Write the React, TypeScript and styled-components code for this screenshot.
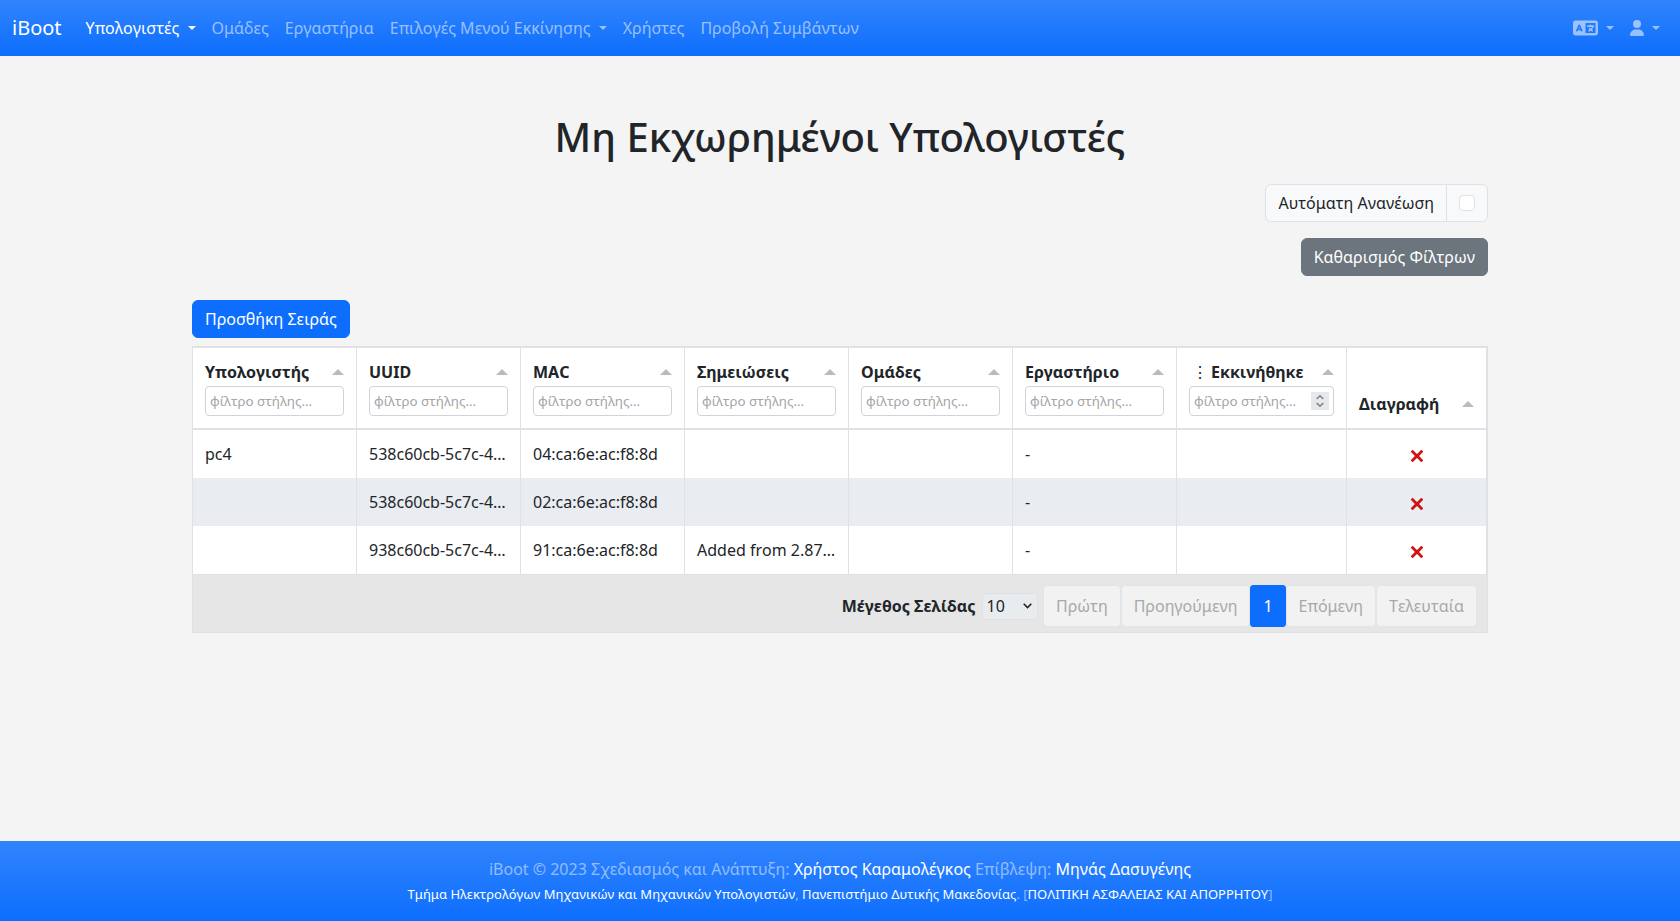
import React from "react";
import styled, { createGlobalStyle, css } from "styled-components";
import { FaLanguage, FaUser } from "react-icons/fa6";

const Global = createGlobalStyle`
  *, *::before, *::after { box-sizing: border-box; }
  body {
    margin: 0;
    background: #f4f4f4;
    color: #212529;
    font: 400 16px/1.5 "Noto Sans", "Liberation Sans", sans-serif;
    font-kerning: none;
  }
  button, input, select { font-family: inherit; font-kerning: none; margin: 0; }
`;

const blueGradient = css`
  background: #0d6efd linear-gradient(180deg, rgba(255, 255, 255, 0.15), rgba(255, 255, 255, 0));
`;

const Page = styled.div`
  min-height: 100vh;
  display: flex;
  flex-direction: column;
`;

const Navbar = styled.nav`
  ${blueGradient}
  height: 56px;
  padding: 0 12px;
  display: flex;
  align-items: center;
`;

const Brand = styled.a`
  color: #fff;
  font-size: 20px;
  line-height: 30px;
  margin-right: 16px;
`;

const NavGroup = styled.div<{ $end?: boolean }>`
  display: flex;
  align-items: center;
  margin-left: ${(p) => (p.$end ? "auto" : "0")};
`;

const NavLink = styled.a<{ $active?: boolean; $toggle?: boolean }>`
  padding: 8px;
  height: 40px;
  white-space: pre;
  color: ${(p) => (p.$active ? "#fff" : "rgba(255, 255, 255, 0.55)")};
  svg { display: inline-block; }
  ${(p) =>
    p.$toggle &&
    css`
      &::after {
        content: "";
        display: inline-block;
        margin-left: 4.08px;
        vertical-align: 4.08px;
        border-top: 4.8px solid;
        border-right: 4.8px solid transparent;
        border-left: 4.8px solid transparent;
      }
    `}
`;

const LanguageIcon = styled(FaLanguage)`
  width: 25px;
  height: 20px;
  vertical-align: -4px;
`;

const UserIcon = styled(FaUser)`
  width: 14px;
  height: 16px;
  vertical-align: -2px;
`;

const Main = styled.main`
  width: 1296px;
  margin: 0 auto;
  padding-top: 57px;
  flex: 1;
  display: flex;
  flex-direction: column;
`;

const Title = styled.h1`
  margin: 0 0 23px;
  font-size: 40px;
  font-weight: 500;
  font-kerning: normal;
  line-height: 48px;
  text-align: center;
`;

const InputGroup = styled.label`
  align-self: flex-end;
  display: flex;
  height: 38px;
  border: 1px solid #dee2e6;
  border-radius: 6px;
  background: #f8f9fa;
`;

const GroupText = styled.span`
  padding: 6px 12px;
  line-height: 24px;
  border-right: 1px solid #dee2e6;
`;

const GroupCheck = styled.span`
  padding: 0 12px;
  display: flex;
  align-items: center;
`;

const Checkbox = styled.input`
  appearance: none;
  width: 16px;
  height: 16px;
  border: 1px solid #dee2e6;
  border-radius: 4px;
  background: #fff;
`;

const Button = styled.button<{ $tone: string; $side: "flex-start" | "flex-end" }>`
  align-self: ${(p) => p.$side};
  height: 38px;
  padding: 6px 12px;
  border: 1px solid ${(p) => p.$tone};
  border-radius: 6px;
  background: ${(p) => p.$tone};
  color: #fff;
  font-size: 16px;
  line-height: 24px;
`;

const Actions = styled.div`
  display: flex;
  flex-direction: column;
  gap: 16px;
  margin-bottom: 24px;
`;

const Table = styled.div`
  margin-top: 8px;
  border: 1px solid #dee2e6;
`;

const columns = "repeat(6, 164px) 170px 1fr";

const HeaderRow = styled.div`
  display: grid;
  grid-template-columns: ${columns};
  height: 83px;
  border-top: 1px solid #dee2e6;
  border-bottom: 2px solid #dee2e6;
  background: #fff;
`;

const HeaderCell = styled.div`
  padding: 12px;
  border-right: 1px solid #dee2e6;
  display: flex;
  flex-direction: column;
  justify-content: flex-end;
  gap: 2px;
  min-width: 0;
`;

const HeaderTitle = styled.div`
  display: flex;
  align-items: center;
  height: 24px;
  font-weight: 700;
`;

const MenuDots = styled.span`
  margin: 0 3px;
  font-weight: 400;
`;

const SortArrow = styled.span`
  margin-left: auto;
  border-left: 6px solid transparent;
  border-right: 6px solid transparent;
  border-bottom: 6px solid #bbb;
`;

const FilterBox = styled.div`
  display: flex;
  align-items: center;
  height: 30px;
  padding: 0 4px;
  border: 1px solid #ced4da;
  border-radius: 4px;
  background: #fff;
`;

const FilterInput = styled.input`
  flex: 1;
  min-width: 0;
  padding: 0;
  border: 0;
  outline: 0;
  background: transparent;
  font-size: 13.333px;
  &::placeholder { color: #a3a5a8; opacity: 1; }
`;

const Spinner = styled.span`
  width: 18px;
  height: 18px;
  background: #e6e8ec;
  svg { display: block; }
`;

const Row = styled.div<{ $shaded: boolean }>`
  display: grid;
  grid-template-columns: ${columns};
  height: 48px;
  background: ${(p) => (p.$shaded ? "#e9ecf1" : "#fff")};
`;

const Cell = styled.div<{ $center?: boolean }>`
  padding: 12px 0 12px ${(p) => (p.$center ? 0 : 12)}px;
  border-right: 1px solid #dee2e6;
  white-space: nowrap;
  text-align: ${(p) => (p.$center ? "center" : "left")};
  svg { vertical-align: -3px; }
`;

const TableFooter = styled.div`
  display: flex;
  align-items: center;
  justify-content: flex-end;
  height: 58px;
  padding: 5px 10px 0 0;
  border-top: 1px solid #dee2e6;
  background: #e6e6e6;
`;

const PageSizeLabel = styled.label`
  font-weight: 700;
`;

const PageSizeBox = styled.span`
  display: grid;
  align-items: center;
  width: 56px;
  height: 27px;
  margin: 0 5.5px 0 6px;
  border: 1px solid #dee2e6;
  border-radius: 4px;
  background: #e9ecef;
  > * { grid-area: 1 / 1; }
  svg {
    justify-self: end;
    margin-right: 5px;
    pointer-events: none;
  }
`;

const PageSize = styled.select`
  appearance: none;
  width: 100%;
  height: 25px;
  padding: 0 0 0 4px;
  border: 0;
  background: transparent;
  color: #212529;
  font-size: 16px;
`;

const PageButton = styled.button<{ $active?: boolean }>`
  height: 42px;
  padding: 0 12px;
  border: 1px solid ${(p) => (p.$active ? "#0d6efd" : "#e2e4e6")};
  border-radius: ${(p) => (p.$active ? 3 : 4)}px;
  background: ${(p) => (p.$active ? "#0d6efd" : "#f2f2f2")};
  color: ${(p) => (p.$active ? "#fff" : "#a6a9ac")};
  font-size: 16px;
  line-height: 24px;
`;

const Footer = styled.footer`
  ${blueGradient}
  height: 80px;
  padding-top: 16px;
  text-align: center;
  color: rgba(255, 255, 255, 0.5);
`;

const FooterLine = styled.div<{ $small?: boolean }>`
  line-height: ${(p) => (p.$small ? 26 : 24)}px;
  font-size: ${(p) => (p.$small ? 13 : 16)}px;
`;

const FooterLink = styled.a`
  color: #fff;
`;

const headings: { label: string; filter?: "text" | "number"; menu?: boolean }[] = [
  { label: "Υπολογιστής", filter: "text" },
  { label: "UUID", filter: "text" },
  { label: "MAC", filter: "text" },
  { label: "Σημειώσεις", filter: "text" },
  { label: "Ομάδες", filter: "text" },
  { label: "Εργαστήριο", filter: "text" },
  { label: "Εκκινήθηκε", filter: "number", menu: true },
  { label: "Διαγραφή" },
];

const rows = [
  ["pc4", "538c60cb-5c7c-4…", "04:ca:6e:ac:f8:8d", "", "", "-", ""],
  ["", "538c60cb-5c7c-4…", "02:ca:6e:ac:f8:8d", "", "", "-", ""],
  ["", "938c60cb-5c7c-4…", "91:ca:6e:ac:f8:8d", "Added from 2.87…", "", "-", ""],
];

const CrossIcon = () => (
  <svg width="14" height="14" viewBox="0 0 24 24">
    <path
      fill="#CE1515"
      d="M22.245,4.015c0.313,0.313,0.313,0.826,0,1.139l-6.276,6.27c-0.313,0.312-0.313,0.826,0,1.14l6.273,6.272c0.313,0.313,0.313,0.826,0,1.14l-2.285,2.277c-0.314,0.312-0.828,0.312-1.142,0l-6.271-6.271c-0.313-0.313-0.828-0.313-1.141,0l-6.276,6.267c-0.313,0.313-0.828,0.313-1.141,0l-2.282-2.28c-0.313-0.313-0.313-0.826,0-1.14l6.278-6.269c0.313-0.312,0.313-0.826,0-1.14L1.709,5.147c-0.314-0.313-0.314-0.827,0-1.14l2.284-2.278C4.308,1.417,4.821,1.417,5.135,1.73L11.405,8c0.314,0.314,0.828,0.314,1.141,0.001l6.276-6.267c0.312-0.312,0.826-0.312,1.141,0L22.245,4.015z"
    />
  </svg>
);

const StepIcon = () => (
  <svg width="18" height="18" viewBox="0 0 18 18" fill="none" stroke="#85888c" strokeWidth="1.6">
    <path d="M5.7 6.8L9 3.8L12.3 6.8M5.7 11.2L9 14.2L12.3 11.2" />
  </svg>
);

const ChevronIcon = () => (
  <svg width="9" height="6" viewBox="0 0 9 6" fill="none" stroke="#212529" strokeWidth="1.6">
    <path d="M0.7 0.8L4.5 4.6L8.3 0.8" />
  </svg>
);

export default function App() {
  return (
    <Page>
      <Global />
      <Navbar>
        <Brand>iBoot</Brand>
        <NavGroup>
          <NavLink $active $toggle>{"Υπολογιστές "}</NavLink>
          <NavLink>Ομάδες</NavLink>
          <NavLink>Εργαστήρια</NavLink>
          <NavLink $toggle>{"Επιλογές Μενού Εκκίνησης "}</NavLink>
          <NavLink>Χρήστες</NavLink>
          <NavLink>Προβολή Συμβάντων</NavLink>
        </NavGroup>
        <NavGroup $end>
          <NavLink $toggle><LanguageIcon />{" "}</NavLink>
          <NavLink $toggle><UserIcon />{" "}</NavLink>
        </NavGroup>
      </Navbar>
      <Main>
        <Title>Μη Εκχωρημένοι Υπολογιστές</Title>
        <Actions>
          <InputGroup>
            <GroupText>Αυτόματη Ανανέωση</GroupText>
            <GroupCheck><Checkbox type="checkbox" /></GroupCheck>
          </InputGroup>
          <Button $tone="#6c757d" $side="flex-end">Καθαρισμός Φίλτρων</Button>
        </Actions>
        <Button $tone="#0d6efd" $side="flex-start">Προσθήκη Σειράς</Button>
        <Table>
          <HeaderRow>
            {headings.map(({ label, filter, menu }) => (
              <HeaderCell key={label}>
                <HeaderTitle>
                  {menu && <MenuDots>⋮</MenuDots>}
                  {label}
                  <SortArrow />
                </HeaderTitle>
                {filter && (
                  <FilterBox>
                    <FilterInput placeholder="φίλτρο στήλης..." />
                    {filter === "number" && <Spinner><StepIcon /></Spinner>}
                  </FilterBox>
                )}
              </HeaderCell>
            ))}
          </HeaderRow>
          {rows.map((row, i) => (
            <Row key={i} $shaded={i % 2 === 1}>
              {row.map((value, j) => <Cell key={j}>{value}</Cell>)}
              <Cell $center><CrossIcon /></Cell>
            </Row>
          ))}
          <TableFooter>
            <PageSizeLabel>Μέγεθος Σελίδας</PageSizeLabel>
            <PageSizeBox>
              <PageSize><option>10</option></PageSize>
              <ChevronIcon />
            </PageSizeBox>
            <PageButton>Πρώτη</PageButton>
            <PageButton>Προηγούμενη</PageButton>
            <PageButton $active>1</PageButton>
            <PageButton>Επόμενη</PageButton>
            <PageButton>Τελευταία</PageButton>
          </TableFooter>
        </Table>
      </Main>
      <Footer>
        <FooterLine>
          iBoot © 2023 Σχεδιασμός και Ανάπτυξη: <FooterLink>Χρήστος Καραμολέγκος</FooterLink> Επίβλεψη:{" "}
          <FooterLink>Μηνάς Δασυγένης</FooterLink>
        </FooterLine>
        <FooterLine $small>
          <FooterLink>Τμήμα Ηλεκτρολόγων Μηχανικών και Μηχανικών Υπολογιστών</FooterLink>,{" "}
          <FooterLink>Πανεπιστήμιο Δυτικής Μακεδονίας</FooterLink>. [
          <FooterLink>ΠΟΛΙΤΙΚΗ ΑΣΦΑΛΕΙΑΣ ΚΑΙ ΑΠΟΡΡΗΤΟΥ</FooterLink>]
        </FooterLine>
      </Footer>
    </Page>
  );
}
